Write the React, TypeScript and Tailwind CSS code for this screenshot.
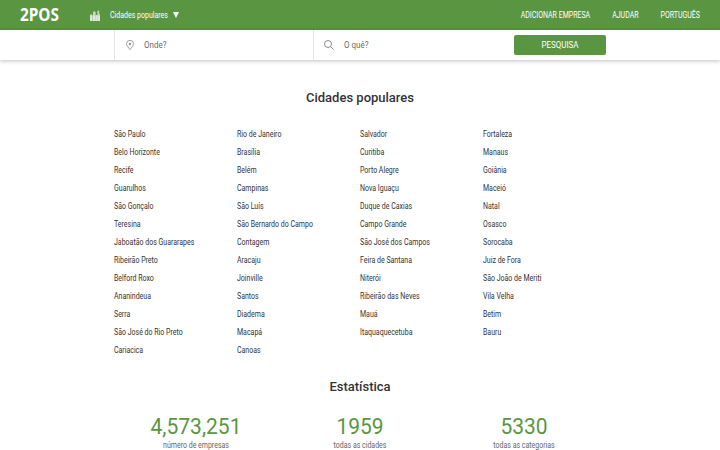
import React from "react";

const columns: string[][] = [
  ["São Paulo", "Belo Horizonte", "Recife", "Guarulhos", "São Gonçalo", "Teresina", "Jaboatão dos Guararapes", "Ribeirão Preto", "Belford Roxo", "Ananindeua", "Serra", "São José do Rio Preto", "Cariacica"],
  ["Rio de Janeiro", "Brasília", "Belém", "Campinas", "São Luís", "São Bernardo do Campo", "Contagem", "Aracaju", "Joinville", "Santos", "Diadema", "Macapá", "Canoas"],
  ["Salvador", "Curitiba", "Porto Alegre", "Nova Iguaçu", "Duque de Caxias", "Campo Grande", "São José dos Campos", "Feira de Santana", "Niterói", "Ribeirão das Neves", "Mauá", "Itaquaquecetuba"],
  ["Fortaleza", "Manaus", "Goiânia", "Maceió", "Natal", "Osasco", "Sorocaba", "Juiz de Fora", "São João de Meriti", "Vila Velha", "Betim", "Bauru"],
];

const stats = [
  { value: "4,573,251", label: "número de empresas" },
  { value: "1959", label: "todas as cidades" },
  { value: "5330", label: "todas as categorias" },
];

function CityIcon() {
  return (
    <svg className="ml-[31px] h-[11px] w-[10px] shrink-0" viewBox="0 0 10 11" fill="#fff">
      <path fillOpacity=".65" d="M0 4.5h2.4V11H0zM3 2.2 4.2 1l1.5 1.2V11H3zM6 5h1.2v6H6zM7.4.8h1.8V4l.8.6V11H7.4z" />
      <path fillOpacity=".4" d="M0 5.5h10V11H0z" />
    </svg>
  );
}

function PinIcon() {
  return (
    <svg className="ml-[11px] h-[10px] w-[8px]" viewBox="0 0 8 10" fill="none" stroke="#808080" strokeWidth=".75">
      <path d="M4 9.6C2.8 7.7.5 5.9.5 3.8a3.5 3.5 0 0 1 7 0C7.5 5.9 5.2 7.7 4 9.6Z" />
      <circle cx="4" cy="3.9" r=".8" fill="#777" />
    </svg>
  );
}

function SearchIcon() {
  return (
    <svg className="ml-[10px] h-[10px] w-[10px]" viewBox="0 0 10 10" fill="none" stroke="#777" strokeWidth=".85">
      <circle cx="4" cy="4" r="3.5" />
      <path d="m6.5 6.5 3.2 3.2" />
    </svg>
  );
}

export default function App() {
  return (
    <div className="h-[450px] w-[720px] overflow-hidden bg-white font-['Roboto',sans-serif] text-[#333]">
      <header className="flex h-[30px] items-center bg-[#5a9642] px-5 text-[7px] text-white">
        <div className="w-[39px] whitespace-nowrap">
          <div className="w-max origin-left scale-x-[0.9] font-['Open_Sans',sans-serif] text-[17px] leading-[30px] font-bold">2POS</div>
        </div>
        <CityIcon />
        <span className="ml-[10px] translate-y-[0.5px] scale-y-[1.27]">Cidades populares</span>
        <svg className="ml-[5px] h-[6px] w-[6px]" viewBox="0 0 6 6" fill="#fff"><path d="M0 0h6L3 6z" /></svg>
        <nav className="ml-auto flex translate-y-[0.5px] scale-y-[1.27] gap-[22px]">
          <span>ADICIONAR EMPRESA</span>
          <span>AJUDAR</span>
          <span>PORTUGUÊS</span>
        </nav>
      </header>
      <div className="flex h-[30px] items-center pl-[114px] text-[8px] text-[#6a6a6a] shadow-[0_1px_4px_rgba(0,0,0,0.25)]">
        <div className="flex h-full w-[199px] items-center border-l border-[#e6e6e6]">
          <PinIcon />
          <span className="ml-[10px] translate-y-[1px] scale-y-[1.14]">Onde?</span>
        </div>
        <div className="flex h-full w-[201px] items-center border-l border-[#e6e6e6]">
          <SearchIcon />
          <span className="ml-[10px] translate-y-[1px] scale-y-[1.14]">O quê?</span>
        </div>
        <button className="h-5 w-[92px] rounded-[2px] bg-[#5a9642] text-[8px] text-white">
          <span className="inline-block translate-y-[1px] scale-y-[1.14]">PESQUISA</span>
        </button>
      </div>
      <main className="mx-auto w-[492px]">
        <h2 className="mt-[28px] text-center text-[13px] leading-5 font-medium">Cidades populares</h2>
        <div className="mt-[17px] grid h-[234px] grid-cols-4">
          {columns.map((cities) => (
            <ul key={cities[0]} className="text-[7px] leading-[18px] whitespace-nowrap">
              {cities.map((city) => <li key={city} className="translate-y-[0.5px] scale-y-[1.27]">{city}</li>)}
            </ul>
          ))}
        </div>
        <h2 className="mt-[18px] text-center text-[13px] leading-5 font-medium">Estatística</h2>
        <div className="mt-[17px] grid grid-cols-3 text-center">
          {stats.map((s) => (
            <div key={s.label}>
              <div className="scale-y-105 text-[21px] leading-[26px] text-[#5a9642]">{s.value}</div>
              <div className="translate-y-[0.5px] scale-y-[1.27] text-[7px] leading-[11px] text-[#666]">{s.label}</div>
            </div>
          ))}
        </div>
      </main>
    </div>
  );
}
